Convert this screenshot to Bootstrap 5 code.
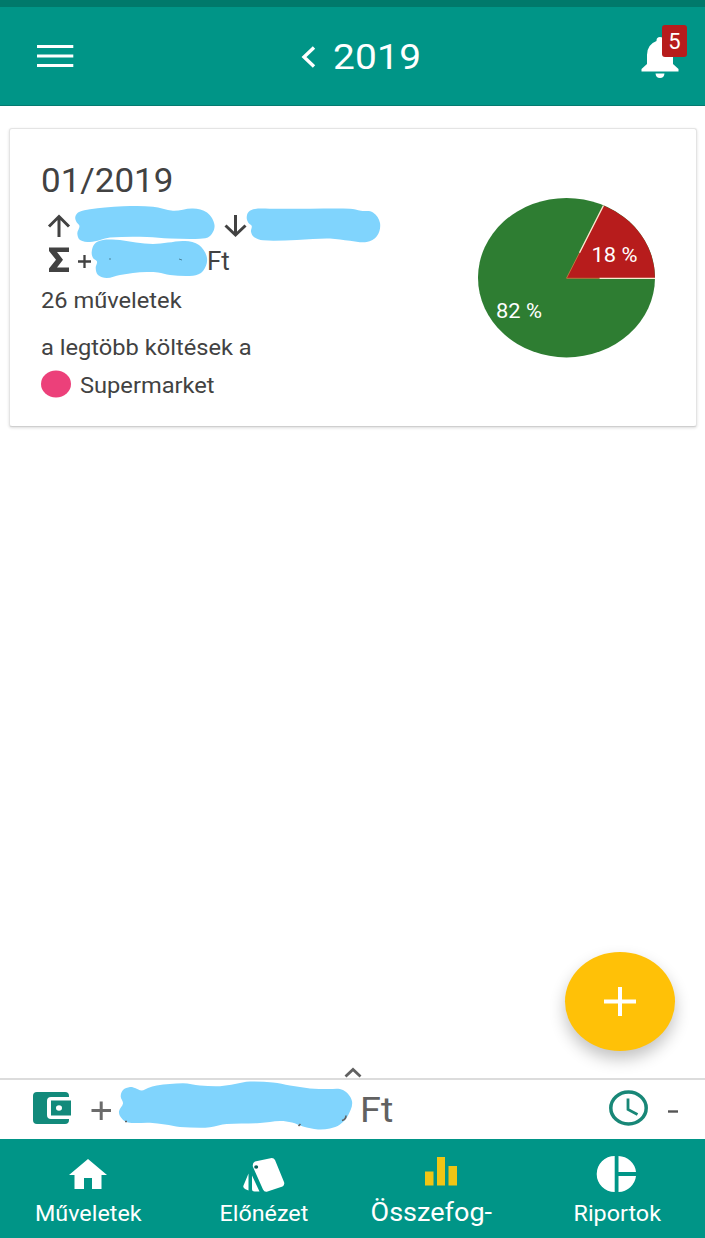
<!DOCTYPE html>
<html lang="hu">
<head>
<meta charset="utf-8">
<meta name="viewport" content="width=device-width, initial-scale=1">
<title>2019</title>
<link rel="stylesheet" href="https://cdn.jsdelivr.net/npm/bootstrap@5.3.0/dist/css/bootstrap.min.css">
<style>
body{font-family:Roboto,sans-serif;color:#424242;background:#fff;height:1238px;overflow:hidden}
svg{display:block;flex:none;overflow:visible}
.teal{background:#009587}
.topbar{height:106px;border-top:7px solid #00796b;border-bottom:1px solid #047a70;padding:2px 22px 0 36px}
.wide{display:inline-block;white-space:nowrap;line-height:1;transform:scaleX(var(--sx,1.075));transform-origin:0 50%}
.year{font-size:35px;--sx:1.11;width:88px;letter-spacing:.2px}
.alerts{width:42px;height:56px;margin-top:-8px}
.count{position:absolute;left:21px;top:0;width:25px;height:32px;border-radius:3px;background:#b71c1c;font-size:22px;line-height:34px;text-align:center}
.month{margin:22px 8px 0 9px;height:299px;border:1px solid #e4e4e4;border-bottom-color:#cfcfcf;border-radius:3px;box-shadow:0 1px 3px rgba(0,0,0,.14);padding:34px 41px 0 31px}
.month-title{font-size:33px;height:34px}
.month-title .wide{display:block;line-height:36px}
.t22{font-size:22px}
.pie{margin-top:35px}
.fab-btn{width:110px;height:99px;border-radius:50%;background:#ffc107;box-shadow:0 8px 16px rgba(0,0,0,.24);margin:0 30px 27px 0}
.balance{height:61px;border-top:2px solid #dcdcdc;color:#616161;padding:0 26px 3px 33px}
.handle{position:absolute;left:344px;top:-13px}
.tabs{height:99px}
.tab-item{width:176.25px;height:99px;padding-top:17px}
.tab-item svg{height:36px}
.tab-item .wide{font-size:22px;--sx:1.06;transform-origin:50% 50%;margin-top:11px}
.tab-item .tab-open{font-size:25.500px;--sx:1.06;margin:8px 18px 0 0}
</style>
</head>
<body class="d-flex flex-column">
<header class="topbar teal text-white d-flex align-items-center justify-content-between flex-shrink-0">
  <svg width="38" height="24" viewBox="0 0 38 24"><path d="M1 2.400H37.300M1 12H37.300M1 21.600H37.300" stroke="#fff" stroke-width="3" transform="translate(0,-1)"/></svg>
  <div class="d-flex align-items-center" style="margin-left:6px">
    <svg width="15" height="22" viewBox="0 0 15 22" style="margin-right:17px"><path d="M13 1.500L3 11L13 20.500" fill="none" stroke="#fff" stroke-width="3.400"/></svg>
    <span class="wide year">2019</span>
  </div>
  <div class="alerts position-relative">
    <svg width="38" height="42" viewBox="0 0 38 42" style="margin-top:12px"><path fill="#fff" d="M15.500 3.500Q15.500 0 19 0T22.500 3.500V4Q32 7.500 32 18V27L37.500 32V34.500H.5V32L6 27V18Q6 7.500 15.500 4ZM14.500 36.500H23.500Q23 41 19 41T14.500 36.500Z"/></svg>
    <span class="count">5</span>
  </div>
</header>

<main class="flex-grow-1 d-flex flex-column">
  <section class="month bg-white d-flex justify-content-between">
    <div>
      <div class="month-title"><span class="wide" style="--sx:1.06">01/2019</span></div>
      <div class="d-flex" style="margin-top:9px">
        <svg width="34" height="36" viewBox="41 206 34 36"><path d="M59 237V217M49 226.500L59 216.500L69 226.500" fill="none" stroke="#424242" stroke-width="3"/></svg>
        <svg class="blob" width="140" height="36" viewBox="75 206 140 36" data-points="75.3,216.7 79,212 90,209.3 105,207.500 123,206.300 153,206.700 173,210.700 193,208.500 207,212.500 214.500,225 210,236 200,238.800 170,238.500 147,237 110,237.500 100,240 90,242 80,240 77.300,233.300 79.500,226 76.500,222"></svg>
        <svg width="32" height="36" viewBox="215 206 32 36"><path d="M235.500 215V235M225.500 225.500L235.500 235L245.500 225.500" fill="none" stroke="#424242" stroke-width="3"/></svg>
        <svg class="blob" width="134" height="36" viewBox="247 206 134 36" data-points="246.700,218 248.500,212 255,209 270,208.800 310,208.800 350,208.800 361,210.800 373,212.500 380,223 377,236 366.700,242 350,240.700 330,238.500 313,239 296.700,240 263,240.300 254,237 251,231.700 251.700,226 248.500,223"></svg>
      </div>
      <div class="d-flex" style="margin-top:-3px">
        <svg width="51" height="39" viewBox="41 239 51 39"><path fill="#424242" d="M49 247.500H69V252H57L63 259.700L57 267.500H69V272H49V268.500L56 259.700L49 251Z"/><path d="M78 261.500H91M84.500 255V268" stroke="#424242" stroke-width="2.300"/></svg>
        <svg class="blob" width="115" height="39" viewBox="92 239 115 39" data-points="91.700,252 94.500,244 102,240.300 111,239.500 120,240 136,242.500 153,244 168,242.500 185,241 199,245 207,258 203,271 193,275.700 170,275 158,272.500 146.700,272 133,273 120,275 106.700,278 98,275 95.700,268 97,261.500 93,258"><path d="M109 259h2M179 259l3 1" stroke="#49839d"/></svg>
        <span class="wide" style="font-size:25px;margin-top:10px;--sx:1.04">Ft</span>
      </div>
      <div style="margin-top:12px"><span class="wide t22 d-block">26 műveletek</span></div>
      <div style="margin-top:25px"><span class="wide t22 d-block">a legtöbb költések a</span></div>
      <div class="d-flex align-items-center" style="margin-top:11px">
        <svg width="30" height="28" viewBox="0 0 30 28"><ellipse cx="15" cy="14" rx="15" ry="13.500" fill="#ec407a"/></svg>
        <span class="wide t22" style="margin:3px 0 0 9px">Supermarket</span>
      </div>
    </div>
    <svg class="pie" width="177" height="160" viewBox="478.500 198 177 160">
      <ellipse cx="567" cy="277.700" rx="88.500" ry="79.700" fill="#2e7d32"/>
      <path d="M567 278.200L604 205.500A88.500 79.700 0 0 1 655.500 278.200Z" fill="#b71c1c"/>
      <path d="M567 278.200L580 252.700M567 278.300H600" fill="none" stroke="#c98345" stroke-width=".8"/>
      <path d="M604 205.500L580 252.700M600 278.400H655.500" fill="none" stroke="#fbe9cf" stroke-width="1.400"/>
      <g fill="#fff" font-size="20"><text x="592" y="262" textLength="46" lengthAdjust="spacingAndGlyphs">18 %</text><text x="496.500" y="317.500" textLength="46" lengthAdjust="spacingAndGlyphs">82 %</text></g>
    </svg>
  </section>
  <button class="fab-btn btn p-0 mt-auto ms-auto border-0 d-flex align-items-center justify-content-center" aria-label="+">
    <svg width="32" height="30" viewBox="0 0 32 30"><path d="M0 14.500H32M16 0V29" stroke="#fff" stroke-width="4"/></svg>
  </button>
</main>

<section class="balance bg-white position-relative d-flex align-items-center flex-shrink-0">
  <svg class="handle" width="18" height="11" viewBox="0 0 18 11"><path d="M1.500 9.500L9 2.500L16.500 9.500" fill="none" stroke="#616161" stroke-width="2.800"/></svg>
  <svg width="38" height="32" viewBox="0 0 38 32"><path fill="#128a7b" d="M4 0H32Q36 0 36 4V5H18Q14 5 14 9V23Q14 27 18 27H36V28Q36 32 32 32H4Q0 32 0 28V4Q0 0 4 0ZM18 8.500H38V23.500H18ZM29 16A3 2.700 0 1 0 23 16A3 2.700 0 1 0 29 16Z" fill-rule="evenodd"/></svg>
  <svg width="48" height="50" viewBox="71 1083 48 50"><path d="M91.500 1110.500H111M101.200 1101.500V1120" stroke="#6b6b6b" stroke-width="3"/></svg>
  <svg class="blob" width="233" height="50" viewBox="119 1083.500 233 50" data-points="120.700,1097 123,1090.500 130,1087.500 135,1088.500 141.700,1091 148,1088.500 156.700,1086 183,1083.800 200,1086 220,1086.700 235,1084.500 250,1082 273,1083 290,1086 310,1088.900 328,1089.500 343,1090.500 352,1101.700 348,1116 340,1125 330,1129 318,1130 303,1127 292,1123 280,1121.500 260,1123.500 226.700,1124.500 210,1127.700 200,1128.300 180,1127.500 165,1125 150,1123.300 128,1123 121,1118 119,1111.700 123,1104"><path d="M125 1122h2M298.500 1126.500l2-2M342 1121q4-1 4-5" fill="none" stroke="#616161" stroke-width="1.600"/></svg>
  <span class="wide" style="font-size:35px;margin:5px 0 0 8px;--sx:1.08">Ft</span>
  <svg class="ms-auto" width="39" height="36" viewBox="0 0 39 36"><ellipse cx="19.500" cy="18" rx="17.700" ry="16" fill="none" stroke="#188777" stroke-width="3.500"/><path d="M19 8.500V19.500L28.500 24.500" fill="none" stroke="#188777" stroke-width="2.800"/></svg>
  <svg width="31" height="36" viewBox="0 0 31 36"><path d="M20 21.500H30" stroke="#555" stroke-width="2.400"/></svg>
</section>

<nav class="tabs teal text-white d-flex flex-shrink-0">
  <div class="tab-item d-flex flex-column align-items-center">
    <svg width="38" viewBox="0 0 38 36"><path fill="#fff" d="M19 3L38 19H32.500V33H23V22H15V33H5.500V19H0Z"/></svg>
    <span class="wide">Műveletek</span>
  </div>
  <div class="tab-item d-flex flex-column align-items-center">
    <svg width="42" viewBox="243.500 1156 42 36"><path fill="#fff" d="M255.500 1161.500L271 1158.300Q274 1157.500 275.500 1160L284.500 1182Q285.500 1185 283 1186.500L268 1191.500Q265 1192.500 263.500 1189.500L253.500 1167Q252.500 1163 255.500 1161.500ZM243.800 1186L249 1173.500V1190.500L246 1189.300Q243.500 1188 243.800 1186ZM252.500 1175.500L260 1191.500H255Q252.500 1191.500 252.500 1189Z"/><ellipse cx="256.700" cy="1167" rx="2" ry="1.800" fill="#075e56"/></svg>
    <span class="wide">Előnézet</span>
  </div>
  <div class="tab-item d-flex flex-column align-items-center">
    <svg width="32" viewBox="0 0 32 36"><path fill="#f0c514" d="M0 15.500H8.500V29.500H0ZM12 1H20V29.500H12ZM23.500 10H32V29.500H23.500Z"/></svg>
    <span class="wide tab-open">Összefog-</span>
  </div>
  <div class="tab-item d-flex flex-column align-items-center">
    <svg width="39" viewBox="0 0 39 36"><path fill="#fff" d="M17.700 0V36A18 18 0 0 1 17.700 0ZM21.500 0A18.500 18 0 0 1 39 16H21.500ZM21.500 20H39A18.500 18 0 0 1 21.500 36Z"/></svg>
    <span class="wide">Riportok</span>
  </div>
</nav>
<script src="https://cdn.jsdelivr.net/npm/bootstrap@5.3.0/dist/js/bootstrap.bundle.min.js"></script>
<script>
// Draws each redaction stroke as a smooth closed curve through its points.
document.querySelectorAll('.blob').forEach(svg => {
  const p = svg.dataset.points.trim().split(/\s+/).map(s => s.split(',').map(Number));
  const n = p.length, at = i => p[(i + n) % n];
  let d = 'M' + p[0];
  for (let i = 0; i < n; i++) {
    const [a, b, c, e] = [at(i - 1), at(i), at(i + 1), at(i + 2)];
    const len = Math.hypot(c[0] - b[0], c[1] - b[1]) / 3;
    const t = (u, v) => { const l = Math.hypot(v[0] - u[0], v[1] - u[1]); return [(v[0] - u[0]) / l * len, (v[1] - u[1]) / l * len]; };
    const m = t(a, c), k = t(b, e);
    d += `C${b[0] + m[0]},${b[1] + m[1]} ${c[0] - k[0]},${c[1] - k[1]} ${c}`;
  }
  const path = document.createElementNS('http://www.w3.org/2000/svg', 'path');
  path.setAttribute('d', d + 'Z');
  path.setAttribute('fill', '#80d4fd');
  svg.prepend(path);
});
</script>
</body>
</html>
